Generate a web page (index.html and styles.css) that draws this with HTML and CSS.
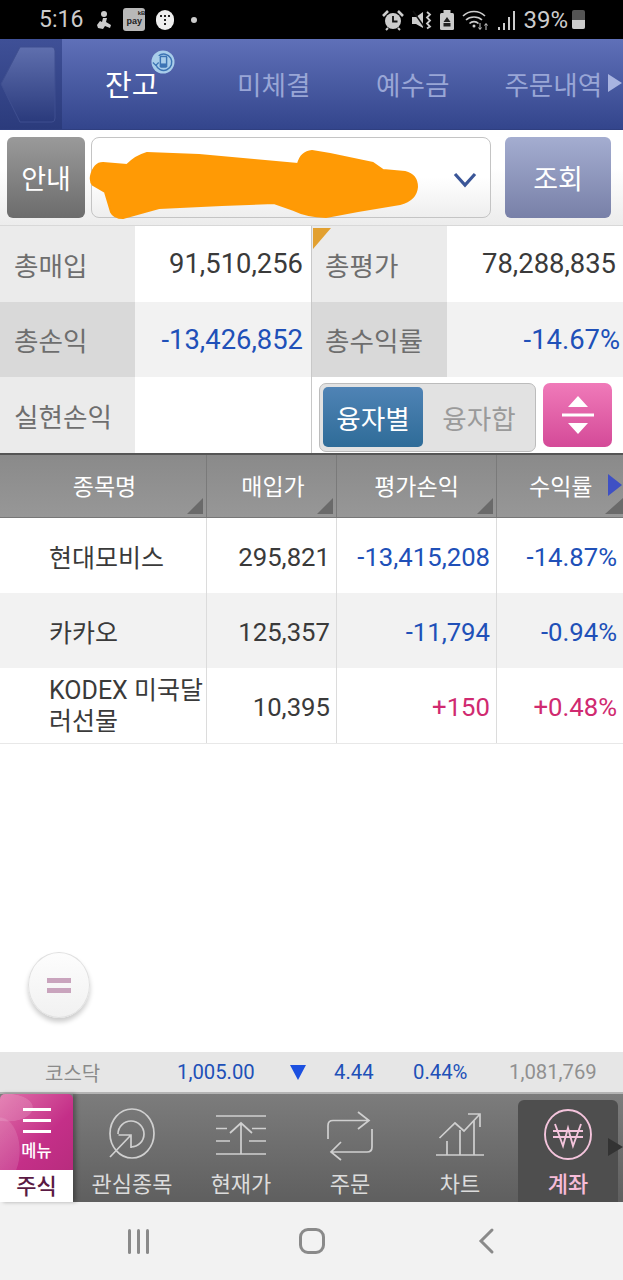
FILE: index.html
```html
<!DOCTYPE html>
<html lang="ko">
<head>
    <meta charset="UTF-8">
    <meta name="viewport" content="width=device-width, initial-scale=1.0">
    <title>잔고</title>
    <link rel="stylesheet" href="styles.css">
</head>
<body>
<div class="page">
    <div class="statusbar">
        <div class="status-left">
            <span class="clock">5:16</span>
            <svg class="st-icon" width="16" height="20" viewBox="0 0 16 20"><circle cx="8" cy="4" r="3" fill="#ccc"/><path d="M7 8h4l-1 4 5 3-1 3-5-2-2 3-5-1-1-3 3-4 2 1z" fill="#ccc"/></svg>
            <span class="pay-badge"><span class="pay-top">kB</span><span class="pay-main">pay</span></span>
            <span class="talk-badge"><svg width="12" height="12" viewBox="0 0 12 12"><g fill="#222"><rect x="1" y="1" width="2" height="2"/><rect x="5" y="1" width="2" height="2"/><rect x="9" y="1" width="2" height="2"/><rect x="5" y="5" width="2" height="2"/><rect x="5" y="9" width="2" height="2"/></g></svg></span>
            <span class="dot"></span>
        </div>
        <div class="status-right">
            <svg width="22" height="22" viewBox="0 0 22 22"><circle cx="11" cy="12" r="8" fill="#ccc"/><path d="M11 7v5.500h4.500" stroke="#111" stroke-width="1.800" fill="none"/><path d="M1 7l5-5M21 7l-5-5" stroke="#ccc" stroke-width="2.600"/><path d="M6 19l-2 2M16 19l2 2" stroke="#ccc" stroke-width="2"/></svg>
            <svg width="20" height="22" viewBox="0 0 20 22"><path d="M0 8h4l7-5v16l-7-4H0z" fill="#ccc"/><path d="M1 2l12 17" stroke="#111" stroke-width="1.500"/><path d="M15 3l3 2.500-3 3 3 3-3 3 3 3-3 2" stroke="#ccc" stroke-width="1.800" fill="none"/></svg>
            <svg width="14" height="22" viewBox="0 0 14 22"><rect x="0" y="4" width="14" height="17" rx="1.500" fill="#ccc"/><rect x="3.500" y="1" width="7" height="3" fill="#ccc"/><path d="M7 8l3.500 5h-7zM3.500 14h7v3.500h-7z" fill="#222"/></svg>
            <svg width="27" height="22" viewBox="0 0 27 22"><g fill="none" stroke="#ccc" stroke-width="1.600"><path d="M1 7c6-6 16-6 22 0"/><path d="M4 11c4-4 12-4 16 0"/><path d="M7.500 14.500c2.500-2.500 6.500-2.500 9 0"/></g><circle cx="12" cy="17" r="1.500" fill="#ccc"/><path d="M18 14v6M16.500 18.500l1.500 2 1.500-2M24 21v-6M22.500 16.500l1.500-2 1.500 2" stroke="#ccc" stroke-width="1" fill="none"/></svg>
            <svg width="18" height="22" viewBox="0 0 18 22"><g fill="#ccc"><rect x="1" y="18" width="2" height="3"/><rect x="6" y="14" width="2" height="7"/><rect x="11" y="8" width="2" height="13"/><rect x="16" y="2" width="2" height="19"/></g></svg>
            <span class="battery-text">39%</span>
            <span class="battery"><span class="battery-fill"></span></span>
        </div>
    </div>

    <header class="tabbar">
        <div class="back-cell">
            <svg width="56" height="78" viewBox="0 0 56 78"><defs><linearGradient id="backfill" x1="0" y1="0" x2="0" y2="1"><stop offset="0" stop-color="#5f6fae"/><stop offset="1" stop-color="#2a3a7c"/></linearGradient></defs><path d="M20 1H52q3 0 3 4V72q0 4-3 4H20L1 38z" fill="url(#backfill)" stroke="#3f4f90"/></svg>
        </div>
        <nav class="tabs">
            <span class="tab tab-active">잔고
                <svg class="sync-icon" width="24" height="24" viewBox="0 0 25 25"><circle cx="12.500" cy="12.500" r="12" fill="#a8cdea"/><path d="M5 15a8.500 8.500 0 1 0 3-9" fill="none" stroke="#3c74b4" stroke-width="1.500"/><path d="M2 13l3 3 3-3" fill="none" stroke="#3c74b4" stroke-width="1.300"/><rect x="9" y="6" width="8" height="12.500" rx="1.500" fill="#3c74b4"/><rect x="10.500" y="7.500" width="5" height="6.500" fill="#a8cdea"/></svg>
            </span>
            <span class="tab tab-second">미체결</span>
            <span class="tab tab-third">예수금</span>
            <span class="tab tab-fourth">주문내역<span class="tab-arrow"></span></span>
        </nav>
    </header>

    <div class="toolbar">
        <button class="btn btn-info">안내</button>
        <div class="account-select">
            <svg class="scribble" width="332" height="72" viewBox="0 0 332 72"><path d="M3 26Q6 13 15 13L39 15Q48 6 59 3L111 5 166 10 210 14Q213 2 224 1L242 4 285 13 295 20 317 22Q329 25 329 37 328 50 312 54L270 61 238 67Q218 66 206 60L186 53 134 55 71 58 35 68Q26 68 23 62L17 42 5 35Q2 32 3 26z" fill="#ff9a05" stroke="#ff9a05" stroke-width="2" stroke-linejoin="round"/></svg>
            <svg class="chevron" width="26" height="16" viewBox="0 0 26 16"><path d="M3 2l10 11L23 2" fill="none" stroke="#3b5698" stroke-width="3.200"/></svg>
        </div>
        <button class="btn btn-search">조회</button>
    </div>

    <section class="summary">
        <div class="sum-row">
            <div class="sum-label">총매입</div>
            <div class="sum-value">91,510,256</div>
            <div class="sum-label sum-label-right"><span class="corner-mark"></span>총평가</div>
            <div class="sum-value">78,288,835</div>
        </div>
        <div class="sum-row sum-row-alt">
            <div class="sum-label">총손익</div>
            <div class="sum-value down">-13,426,852</div>
            <div class="sum-label sum-label-right">총수익률</div>
            <div class="sum-value sum-value-end down">-14.67%</div>
        </div>
        <div class="sum-row sum-row-last">
            <div class="sum-label">실현손익</div>
            <div class="sum-value"></div>
            <div class="sum-controls">
                <div class="segment">
                    <span class="seg-item seg-on">융자별</span>
                    <span class="seg-item">융자합</span>
                </div>
                <button class="btn-sort">
                    <svg width="32" height="38" viewBox="0 0 32 38"><path d="M16 0l10 11H6zM16 38L6 27h20z" fill="#fff"/><rect x="0" y="17.500" width="32" height="3" fill="#fff"/></svg>
                </button>
            </div>
        </div>
    </section>

    <section class="grid">
        <div class="grid-row grid-head">
            <div class="gh-cell">종목명<span class="sort-mark"></span></div>
            <div class="gh-cell">매입가<span class="sort-mark"></span></div>
            <div class="gh-cell gh-third">평가손익<span class="sort-mark"></span></div>
            <div class="gh-cell gh-last">수익률<span class="more-mark"></span><span class="sort-mark"></span></div>
        </div>
        <div class="grid-row">
            <div class="cell cell-name">현대모비스</div>
            <div class="cell">295,821</div>
            <div class="cell down">-13,415,208</div>
            <div class="cell down">-14.87%</div>
        </div>
        <div class="grid-row grid-row-alt">
            <div class="cell cell-name">카카오</div>
            <div class="cell">125,357</div>
            <div class="cell down">-11,794</div>
            <div class="cell down">-0.94%</div>
        </div>
        <div class="grid-row grid-row-end">
            <div class="cell cell-name cell-wrap">KODEX 미국달러선물</div>
            <div class="cell">10,395</div>
            <div class="cell up">+150</div>
            <div class="cell up">+0.48%</div>
        </div>
    </section>

    <div class="spacer">
        <div class="fab"><span class="fab-bar"></span><span class="fab-bar"></span></div>
    </div>

    <div class="ticker">
        <span class="tk-name">코스닥</span>
        <span class="tk-index">1,005.00</span>
        <span class="tk-arrow"></span>
        <span class="tk-diff">4.44</span>
        <span class="tk-rate">0.44%</span>
        <span class="tk-volume">1,081,769</span>
    </div>

    <nav class="bottomnav">
        <div class="menu-cell">
            <div class="menu-top">
                <span class="menu-lines"><i></i><i></i><i></i></span>
                <span class="menu-text">메뉴</span>
            </div>
            <div class="menu-bottom">주식</div>
        </div>
        <div class="nav-item nav-watch">
            <svg width="46" height="51" viewBox="0 0 46 51"><g fill="none" stroke="#d0d0d0" stroke-width="1.700"><ellipse cx="23" cy="25.500" rx="22" ry="24.500"/><path d="M9 26a13 13 0 1 1 13 13"/><path d="M1 49l21-22M9.500 27H22v13"/></g></svg>
            <span>관심종목</span>
        </div>
        <div class="nav-item nav-price">
            <svg width="50" height="40" viewBox="0 0 50 40"><g fill="none" stroke="#d0d0d0" stroke-width="1.700"><path d="M0 1h50M0 13.500h11M0 26h14M0 39h50M36 13.500h14M33 26h17"/><path d="M25 39V8M14 18L25 8l11 10"/></g></svg>
            <span>현재가</span>
        </div>
        <div class="nav-item nav-order">
            <svg width="46" height="50" viewBox="0 0 46 50"><g fill="none" stroke="#cfcfcf" stroke-width="1.700"><path d="M31 1l11 8.500-11 8.500M41 9.500H6q-5 0-5 5V28"/><path d="M14 31L4 41l10 8M5 41h35q5 0 5-5V18"/></g></svg>
            <span>주문</span>
        </div>
        <div class="nav-item nav-chart">
            <svg width="48" height="43" viewBox="0 0 48 43"><g fill="none" stroke="#cfcfcf" stroke-width="1.700"><path d="M0 42h48M11 42V28M24 42V17M38 42V8"/><path d="M3.500 25L19 10l9 8L44 1M32 1h12v13"/></g></svg>
            <span>차트</span>
        </div>
        <div class="nav-item nav-active">
            <svg width="48" height="51" viewBox="0 0 48 51"><g fill="none" stroke="#f4c4dc" stroke-width="1.900"><ellipse cx="24" cy="25.500" rx="23" ry="24.500"/><path d="M11 15l8 22 5-18 5 18 8-22M9 22h30M9 28h30"/></g></svg>
            <span>계좌</span>
        </div>
        <span class="nav-more"></span>
    </nav>

    <div class="sysnav">
        <svg width="24" height="26" viewBox="0 0 24 26"><g fill="#8a8a8a"><rect x="2" y="1" width="3" height="25" rx="1.500"/><rect x="11" y="1" width="3" height="25" rx="1.500"/><rect x="20" y="1" width="3" height="25" rx="1.500"/></g></svg>
        <svg width="28" height="28" viewBox="0 0 28 28"><rect x="2.500" y="2.500" width="23" height="23" rx="7.500" fill="none" stroke="#8a8a8a" stroke-width="3"/></svg>
        <svg width="18" height="28" viewBox="0 0 18 28"><path d="M15 3L4 14l11 11" fill="none" stroke="#8a8a8a" stroke-width="3" stroke-linecap="round"/></svg>
    </div>
</div>
</body>
</html>
```

FILE: styles.css
```css
html, body {
    margin: 0;
    padding: 0;
}
body {
    font-family: "Noto Sans CJK KR", Roboto, sans-serif;
    background: #fff;
    color: #333;
}
button {
    font-family: inherit;
    border: none;
    padding: 0;
}
.page {
    width: 623px;
    height: 1280px;
    display: flex;
    flex-direction: column;
    overflow: hidden;
}

/* status bar */
.statusbar {
    height: 39px;
    flex: none;
    background: #000;
    color: #ccc;
    display: flex;
    justify-content: space-between;
    align-items: center;
    padding: 0 38px 0 39px;
}
.status-left, .status-right {
    display: flex;
    align-items: center;
}
.clock {
    font-family: Roboto, sans-serif;
    font-size: 23px;
    margin-right: 13px;
}
.st-icon {
    margin-right: 11px;
}
.pay-badge {
    width: 22px;
    height: 23px;
    border-radius: 3px;
    background: #b8b8b8;
    color: #222;
    display: flex;
    flex-direction: column;
    align-items: center;
    font: bold 9px/9px "Liberation Sans", sans-serif;
    margin-right: 11px;
}
.pay-top {
    font-size: 6px;
    align-self: flex-end;
    margin-top: 2px;
    line-height: 7px;
}
.talk-badge {
    width: 18px;
    height: 20px;
    border-radius: 9px;
    background: #eee;
    display: flex;
    align-items: center;
    justify-content: center;
    margin-right: 17px;
}
.dot {
    width: 6px;
    height: 6px;
    border-radius: 50%;
    background: #ccc;
}
.status-right {
    gap: 8px;
}
.battery-text {
    font-family: Roboto, sans-serif;
    font-size: 24px;
}
.battery {
    width: 13px;
    height: 19px;
    background: #555;
    border-radius: 2px;
    display: flex;
    align-items: flex-end;
    margin-left: -4px;
}
.battery-fill {
    display: block;
    width: 100%;
    height: 9px;
    background: #ccc;
    border-radius: 0 0 2px 2px;
}

/* top tabs */
.tabbar {
    height: 91px;
    flex: none;
    display: flex;
    background: linear-gradient(#5f70b8, #33458c);
    border-bottom: 1px solid #2f3f80;
    box-sizing: border-box;
}
.back-cell {
    width: 62px;
    flex: none;
    background: linear-gradient(#3f5097, #2b3b7c);
    box-sizing: border-box;
    padding-top: 7px;
    overflow: hidden;
}
.back-cell svg {
    display: block;
}
.tabs {
    display: flex;
    align-items: center;
    flex: 1;
    padding: 0 0 0 43px;
    font-size: 26.600px;
    color: #99a6d6;
    white-space: nowrap;
    margin-top: -2px;
}
.tab {
    position: relative;
    display: flex;
    align-items: center;
}
.tab-active {
    font-size: 29px;
    color: #fff;
    width: 132px;
}
.tab-second {
    width: 73px;
}
.tab-third {
    margin-left: 66px;
}
.tab-fourth {
    margin-left: 55px;
}
.tab-arrow {
    width: 0;
    height: 0;
    border-left: 14px solid #a8b4e0;
    border-top: 9px solid transparent;
    border-bottom: 9px solid transparent;
    margin-left: 6px;
}
.sync-icon {
    position: absolute;
    left: 46px;
    top: -12px;
}

/* account row */
.toolbar {
    height: 96px;
    flex: none;
    box-sizing: border-box;
    padding: 7px 12px 8px 7px;
    display: flex;
    gap: 6px;
    background: linear-gradient(#fff 40%, #ececec);
    border-bottom: 1px solid #d8d8d8;
}
.btn {
    height: 81px;
    border-radius: 6px;
    color: #fff;
    font-size: 27px;
    flex: none;
}
.btn-info {
    width: 78px;
    background: linear-gradient(#9a9a9a, #6c6c6c);
}
.btn-search {
    width: 106px;
    margin-left: 8px;
    background: linear-gradient(#a4add0, #7880a8);
}
.account-select {
    position: relative;
    flex: 1;
    height: 81px;
    box-sizing: border-box;
    border: 1px solid #c4c4c4;
    border-radius: 8px;
    background: linear-gradient(#fff 50%, #eee);
}
.scribble {
    position: absolute;
    left: -4px;
    top: 12px;
}
.chevron {
    position: absolute;
    left: 360px;
    top: 34px;
}

/* summary */
.summary {
    flex: none;
}
.sum-row {
    height: 76px;
    display: grid;
    grid-template-columns: 135px 176px 136px 176px;
    font-size: 26.600px;
}
.sum-row-alt {
    height: 75px;
}
.sum-row-alt .sum-label {
    background: #d9d9d9;
}
.sum-row-alt .sum-value {
    background: #f2f2f2;
}
.sum-label {
    position: relative;
    background: #ebebeb;
    color: #6e6e6e;
    display: flex;
    align-items: center;
    padding-left: 14px;
    box-sizing: border-box;
}
.sum-label-right {
    border-left: 1px solid #c8c8c8;
    padding-left: 13px;
}
.sum-value {
    font-family: Roboto, sans-serif;
    font-size: 27.400px;
    display: flex;
    align-items: center;
    justify-content: flex-end;
    padding-right: 8px;
    color: #3a3a3a;
}
.sum-value:last-child {
    padding-right: 7px;
}
.sum-value-end.sum-value-end {
    padding-right: 3px;
}
.corner-mark {
    position: absolute;
    left: 1px;
    top: 2px;
    width: 0;
    height: 0;
    border-top: 21px solid #e2a030;
    border-right: 18px solid transparent;
}
.sum-controls {
    grid-column: 3 / 5;
    border-left: 1px solid #c8c8c8;
    display: flex;
    align-items: flex-start;
    padding: 6px 0 0 7px;
    gap: 7px;
}
.segment {
    width: 217px;
    height: 69px;
    box-sizing: border-box;
    background: #e2e2e2;
    border: 1px solid #bcbcbc;
    border-radius: 7px;
    padding: 3px;
    display: flex;
}
.seg-item {
    flex: 1;
    height: 60px;
    padding-left: 3px;
    display: flex;
    align-items: center;
    justify-content: center;
    color: #9a9a9a;
}
.seg-on {
    flex: none;
    width: 100px;
    padding-left: 0;
    color: #fff;
    border-radius: 5px;
    background: linear-gradient(#4f83b5, #2f6c98);
}
.btn-sort {
    width: 69px;
    height: 64px;
    border-radius: 7px;
    background: linear-gradient(#f07ab9, #d44a98);
    display: flex;
    align-items: center;
    justify-content: center;
}

/* table */
.grid {
    flex: none;
}
.grid-row {
    height: 75px;
    display: grid;
    grid-template-columns: 207px 130px 160px 126px;
    box-sizing: border-box;
}
.grid-row-alt {
    background: #f2f2f2;
}
.grid-row-end {
    height: 76px;
    border-bottom: 1px solid #e8e8e8;
}
.grid-head {
    height: 65px;
    background: linear-gradient(#8a8a8a, #979797);
    border-top: 2px solid #555;
    border-bottom: 1px solid #777;
    color: #fff;
    font-size: 23px;
}
.gh-cell {
    position: relative;
    display: flex;
    align-items: center;
    justify-content: center;
    box-sizing: border-box;
    border-right: 1px solid #7a7a7a;
    padding: 0 0 2px 3px;
}
.gh-third {
    padding-left: 0;
}
.gh-last {
    border-right: none;
    justify-content: flex-start;
    padding-left: 32px;
}
.sort-mark {
    position: absolute;
    right: 3px;
    bottom: 3px;
    width: 0;
    height: 0;
    border-bottom: 16px solid #6a6a6a;
    border-left: 16px solid transparent;
}
.gh-last .sort-mark {
    right: 0;
    border-left-width: 18px;
}
.more-mark {
    position: absolute;
    left: 111px;
    top: 19px;
    width: 0;
    height: 0;
    border-left: 14px solid #3e50c4;
    border-top: 11px solid transparent;
    border-bottom: 11px solid transparent;
}
.cell {
    font-family: Roboto, sans-serif;
    font-size: 25.700px;
    color: #3a3a3a;
    display: flex;
    align-items: center;
    justify-content: flex-end;
    border-right: 1px solid #dcdcdc;
    padding: 2px 6px 0 0;
    box-sizing: border-box;
}
.cell:last-child {
    border-right: none;
}
.cell-name {
    font-family: Roboto, "Noto Sans CJK KR", sans-serif;
    font-size: 25px;
    justify-content: flex-start;
    padding: 0 0 0 49px;
}
.cell-wrap {
    line-height: 31px;
    word-break: break-all;
}
.sum-value.down, .cell.down {
    color: #2050b8;
}
.cell.up {
    color: #d02a70;
}

/* floating button */
.spacer {
    flex: 1;
    position: relative;
}
.fab {
    position: absolute;
    left: 28px;
    top: 208px;
    width: 62px;
    height: 66px;
    border-radius: 50%;
    box-sizing: border-box;
    border: 1px solid #e0e0e0;
    background: linear-gradient(#fdfdfd, #f1f1f1);
    box-shadow: 0 4px 5px rgba(0, 0, 0, .2);
    display: flex;
    flex-direction: column;
    align-items: center;
    justify-content: center;
    gap: 5px;
}
.fab-bar {
    width: 24px;
    height: 5px;
    background: #c9a4bd;
}

/* index ticker */
.ticker {
    height: 40px;
    flex: none;
    background: #e6e6e6;
    display: grid;
    grid-template-columns: 177px 113px 44px 79px 96px 114px;
    align-items: center;
    font-family: Roboto, "Noto Sans CJK KR", sans-serif;
    font-size: 20.300px;
    color: #2050b8;
}
.tk-name {
    font-family: "Noto Sans CJK KR", sans-serif;
    font-size: 20px;
    color: #8a8a8a;
    padding-left: 45px;
}
.tk-arrow {
    width: 0;
    height: 0;
    border-top: 15px solid #1c50e0;
    border-left: 8px solid transparent;
    border-right: 8px solid transparent;
}
.tk-volume {
    color: #909090;
}

/* bottom menu */
.bottomnav {
    position: relative;
    height: 110px;
    flex: none;
    display: flex;
    background: linear-gradient(#7c7c7c, #5f5f5f);
    border-top: 2px solid #b4b4b4;
    box-sizing: border-box;
}
.menu-cell {
    width: 73px;
    flex: none;
    display: flex;
    flex-direction: column;
    box-shadow: 3px 0 4px rgba(0, 0, 0, .3);
}
.menu-top {
    height: 76px;
    background:
        radial-gradient(ellipse 26px 14px at 10% 18%, rgba(255, 255, 255, .14) 0 96%, transparent),
        radial-gradient(ellipse 20px 34px at 0 75%, rgba(255, 255, 255, .12) 0 96%, transparent),
        linear-gradient(135deg, #e06fa8, #c42f88 60%, #b82c7e);
    border-radius: 5px 5px 0 0;
    display: flex;
    flex-direction: column;
    align-items: center;
    padding-top: 14px;
    box-sizing: border-box;
    color: #fff;
    font-size: 16.500px;
    font-weight: 500;
}
.menu-lines {
    display: flex;
    flex-direction: column;
    gap: 8px;
}
.menu-lines i {
    display: block;
    width: 28px;
    height: 3px;
    background: #fff;
}
.menu-text {
    line-height: 22px;
    margin-top: 6px;
}
.menu-bottom {
    height: 32px;
    background: #fff;
    color: #5a1a44;
    font-size: 22px;
    font-weight: 500;
    text-align: center;
    line-height: 29px;
}
.nav-item {
    flex: none;
    width: 100px;
    display: flex;
    flex-direction: column;
    align-items: center;
    box-sizing: border-box;
    padding-bottom: 4px;
    color: #dcdcdc;
    font-size: 22px;
    line-height: 32px;
    white-space: nowrap;
}
.nav-item svg {
    display: block;
}
.nav-item span {
    margin-top: auto;
}
.nav-watch {
    width: 118px;
    padding-top: 14px;
}
.nav-price {
    padding-top: 21px;
}
.nav-order {
    width: 118px;
    padding-top: 17px;
}
.nav-chart {
    margin-left: 1px;
    padding-top: 19px;
}
.nav-active {
    margin: 6px 0 0 8px;
    padding-top: 9px;
    background: #4e4e4e;
    border-radius: 6px 6px 0 0;
    color: #f6bcd8;
    font-weight: 500;
}
.nav-more {
    position: absolute;
    right: 0;
    top: 44px;
    width: 0;
    height: 0;
    border-left: 15px solid #333;
    border-top: 9px solid transparent;
    border-bottom: 9px solid transparent;
}

/* android nav */
.sysnav {
    height: 78px;
    flex: none;
    background: #f2f2f2;
    display: grid;
    grid-template-columns: 276px 72px 275px;
    align-items: center;
    justify-items: center;
}
```
